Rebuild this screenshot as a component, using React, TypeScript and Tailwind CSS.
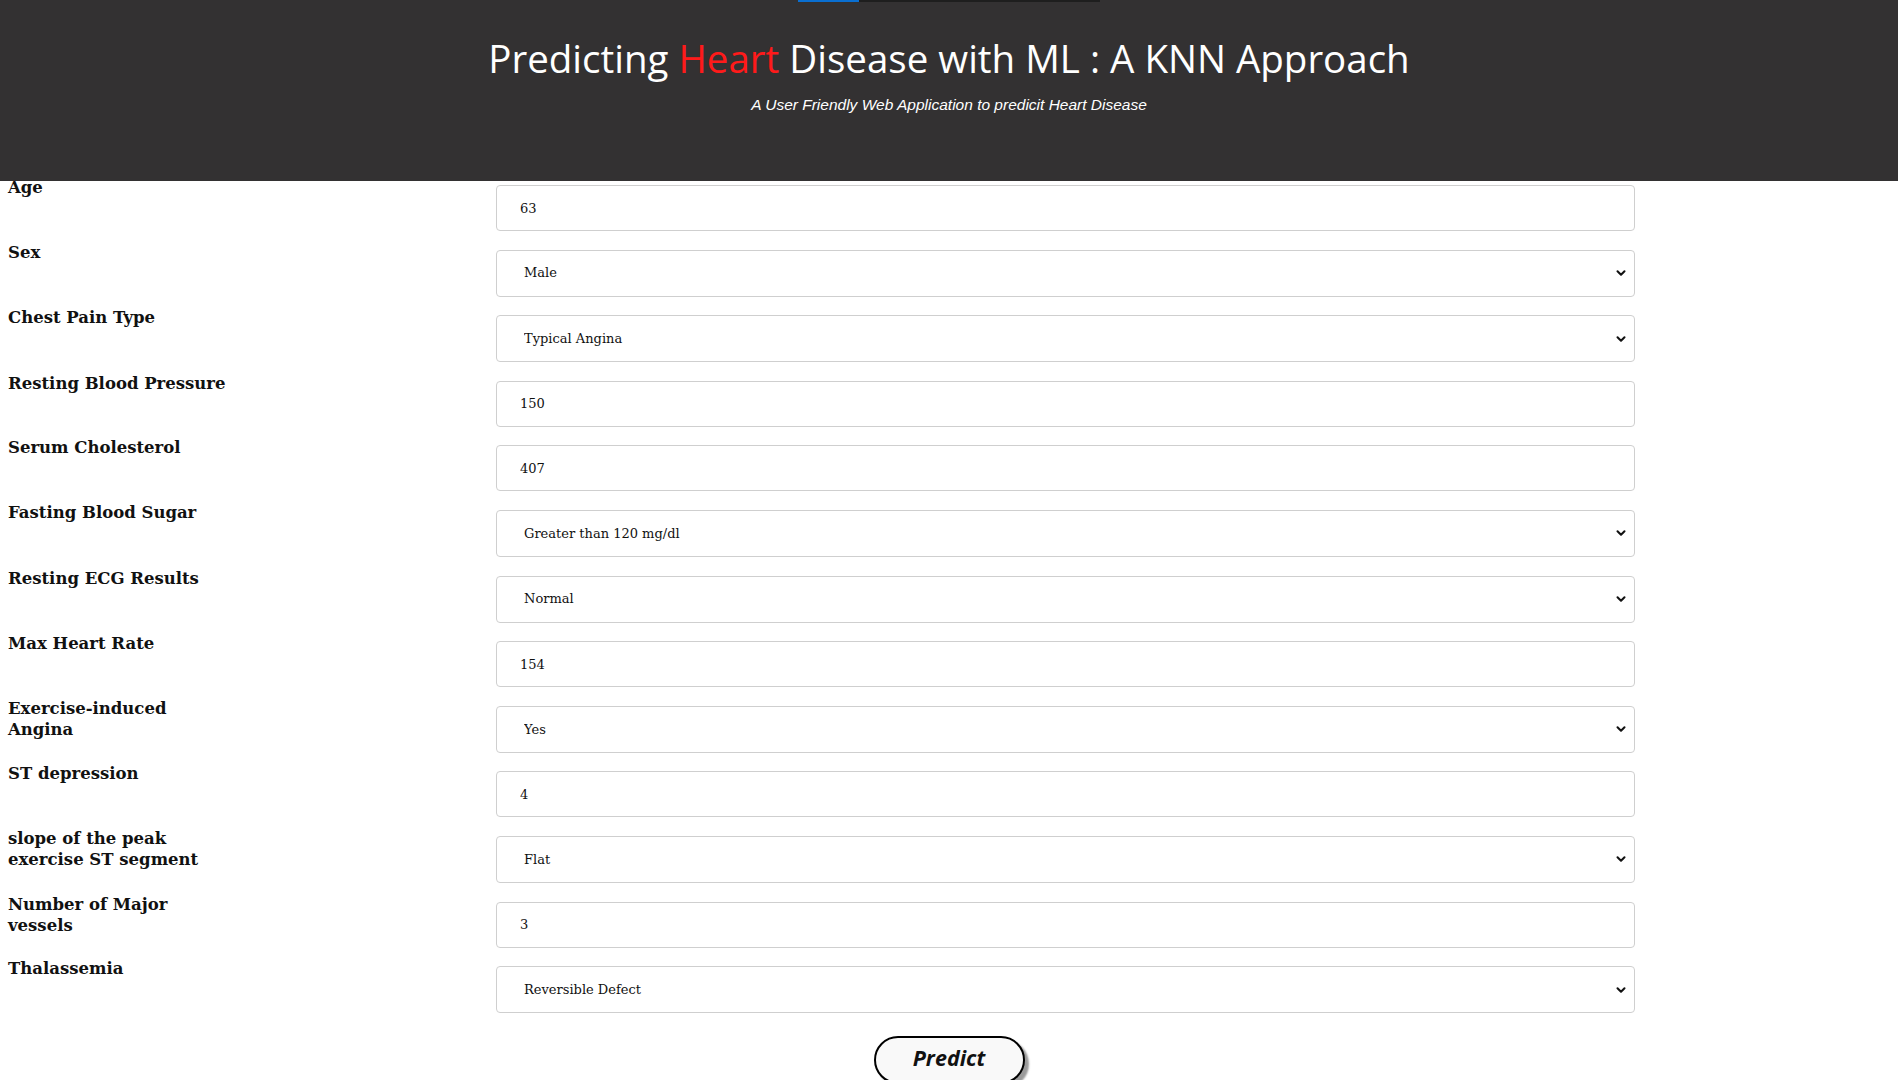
import { ChevronDown } from "lucide-react";

type Field =
  | { kind: "input"; label: string[]; value: string }
  | { kind: "select"; label: string[]; value: string };

const fields: Field[] = [
  { kind: "input", label: ["Age"], value: "63" },
  { kind: "select", label: ["Sex"], value: "Male" },
  { kind: "select", label: ["Chest Pain Type"], value: "Typical Angina" },
  { kind: "input", label: ["Resting Blood Pressure"], value: "150" },
  { kind: "input", label: ["Serum Cholesterol"], value: "407" },
  { kind: "select", label: ["Fasting Blood Sugar"], value: "Greater than 120 mg/dl" },
  { kind: "select", label: ["Resting ECG Results"], value: "Normal" },
  { kind: "input", label: ["Max Heart Rate"], value: "154" },
  { kind: "select", label: ["Exercise-induced", "Angina"], value: "Yes" },
  { kind: "input", label: ["ST depression"], value: "4" },
  { kind: "select", label: ["slope of the peak", "exercise ST segment"], value: "Flat" },
  { kind: "input", label: ["Number of Major", "vessels"], value: "3" },
  { kind: "select", label: ["Thalassemia"], value: "Reversible Defect" },
];

function FormRow({ field }: { field: Field }) {
  return (
    <div className="flex items-start">
      <label className="w-[496px] shrink-0 pl-[8px] pt-[2px] text-[16.5px] font-bold leading-[21px] text-[#111]">
        {field.label.map((line, i) => (
          <span key={i} className="block">
            {line}
          </span>
        ))}
      </label>
      {field.kind === "input" ? (
        <input
          readOnly
          value={field.value}
          className="mt-[10px] h-[46px] w-[1139px] rounded-[4px] border border-[#cfcfcf] bg-white px-[23px] text-[13px] text-[#111] outline-none"
        />
      ) : (
        <div className="relative mt-[10px] w-[1139px]">
          <select
            value={field.value}
            onChange={() => {}}
            className="h-[47px] w-full appearance-none rounded-[4px] border border-[#cfcfcf] bg-white px-[27px] text-[13px] text-[#111] outline-none"
          >
            <option>{field.value}</option>
          </select>
          <ChevronDown
            size={14}
            strokeWidth={3.5}
            className="pointer-events-none absolute right-[7px] top-1/2 -translate-y-1/2 text-[#111]"
          />
        </div>
      )}
    </div>
  );
}

export default function App() {
  return (
    <div className="min-h-screen bg-white font-['DejaVu_Serif',serif]">
      <header className="relative z-10 flex h-[181px] flex-col items-center bg-[#333132]">
        <div className="flex h-[2px] w-[302px]">
          <div className="w-[61px] bg-[#0a6fd1]" />
          <div className="flex-1 bg-[#1e1e1e]" />
        </div>
        <h1 className="mt-[33px] font-['Open_Sans',sans-serif] text-[38.5px] leading-[46px] text-white">
          Predicting <span className="text-[#ff1a1a]">Heart</span> Disease with ML : A KNN Approach
        </h1>
        <p className="mt-[12px] font-['Liberation_Sans',Arial,sans-serif] text-[15.5px] italic text-white">
          A User Friendly Web Application to predicit Heart Disease
        </p>
      </header>

      <form className="-mt-[6px] flex flex-col gap-[8.6px]" onSubmit={(e) => e.preventDefault()}>
        {fields.map((f) => (
          <FormRow key={f.label.join(" ")} field={f} />
        ))}
        <div className="mt-[14px] flex justify-center pb-[20px]">
          <button
            type="submit"
            className="h-[48px] w-[151px] rounded-full border-2 border-black bg-[#f9f9f9] pb-[4px] font-['Open_Sans',sans-serif] text-[21.5px] font-bold italic text-[#111] shadow-[4px_4px_2px_#9a9a9a]"
          >
            Predict
          </button>
        </div>
      </form>
    </div>
  );
}
